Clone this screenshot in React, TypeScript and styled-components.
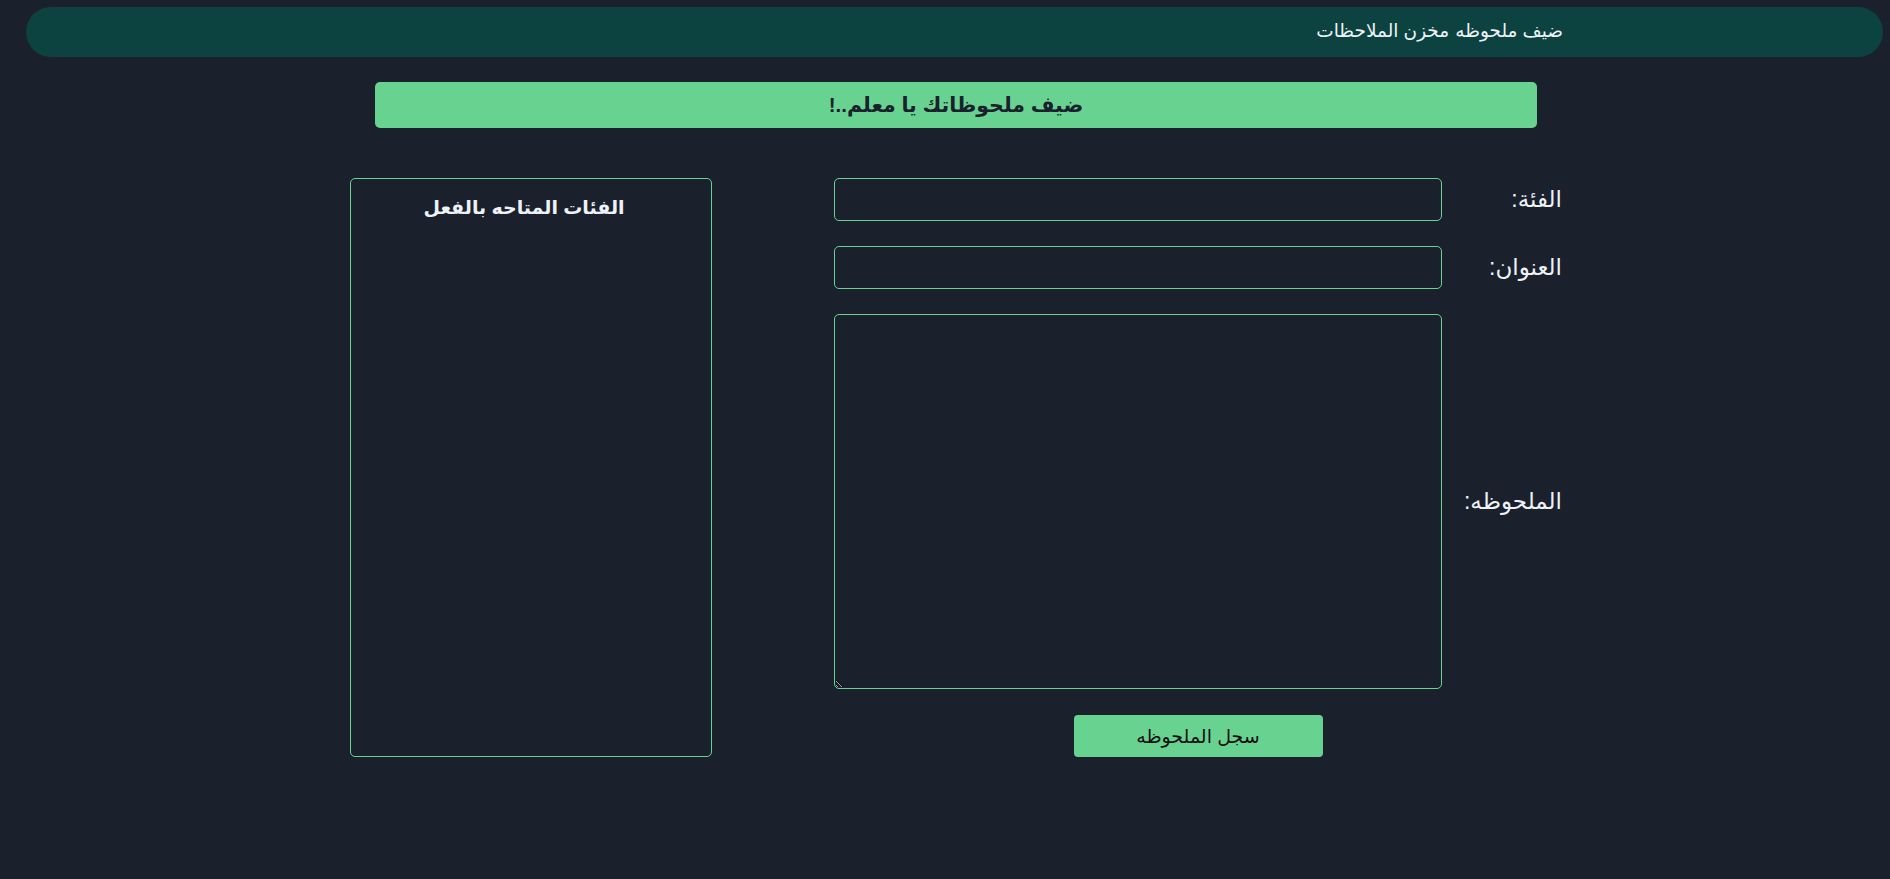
import React from "react";
import styled, { createGlobalStyle } from "styled-components";

const Global = createGlobalStyle`
  html, body {
    margin: 0;
    padding: 0;
    background: #1a202c;
    font-family: "Liberation Sans", "DejaVu Sans", sans-serif;
    color: #edf2f7;
  }
  * { box-sizing: border-box; }
`;

const Page = styled.div`
  direction: rtl;
  min-height: 879px;
  padding-top: 7px;
`;

const Nav = styled.nav`
  height: 50px;
  margin: 0 7px 0 26px;
  background: #0c4340;
  border-radius: 25px;
  display: flex;
  align-items: center;
  padding: 0 320px 3px 0;
  gap: 6px;
`;

const NavLink = styled.a`
  color: #edf2f7;
  font-size: 18.5px;
  text-decoration: none;
  cursor: pointer;
`;

const Main = styled.main`
  display: flex;
  flex-direction: column;
  align-items: center;
  padding-left: 22px;
`;

const Inner = styled.div`
  width: 1212px;
  display: flex;
  flex-direction: column;
  align-items: center;
`;

const Banner = styled.h1`
  margin: 25px 0 0;
  width: 1162px;
  height: 46px;
  background: #68d391;
  color: #1a202c;
  border-radius: 5px;
  font-size: 20.5px;
  font-weight: bold;
  display: flex;
  align-items: center;
  justify-content: center;
`;

const Row = styled.div`
  margin-top: 50px;
  width: 100%;
  display: flex;
  justify-content: space-between;
  align-items: flex-start;
`;

const Form = styled.form`
  width: 728px;
  display: grid;
  grid-template-columns: 120px 608px;
  row-gap: 25px;
  align-items: center;
`;

const Label = styled.label`
  font-size: 23px;
  color: #edf2f7;
  text-align: right;
`;

const Input = styled.input`
  height: 43px;
  width: 608px;
  background: #1a202c;
  border: 1px solid #68d391;
  border-radius: 5px;
  color: #edf2f7;
  font-size: 16px;
  outline: none;
  padding: 0 10px;
`;

const TextArea = styled.textarea`
  height: 375px;
  width: 608px;
  background: #1a202c;
  border: 1px solid #68d391;
  border-radius: 5px;
  color: #edf2f7;
  font-size: 16px;
  outline: none;
  padding: 10px;
  display: block;
`;

const ButtonCell = styled.div`
  grid-column: 1 / span 2;
  display: flex;
  justify-content: center;
  margin-top: 1px;
`;

const Submit = styled.button`
  width: 249px;
  height: 42px;
  background: #68d391;
  border: none;
  border-radius: 4px;
  color: #111;
  font-family: inherit;
  font-size: 19px;
  cursor: pointer;
`;

const Categories = styled.div`
  width: 362px;
  height: 579px;
  border: 1px solid #68d391;
  border-radius: 5px;
  padding: 17px 14px 0 0;
`;

const CatTitle = styled.h2`
  margin: 0;
  text-align: center;
  font-size: 19px;
  font-weight: bold;
  color: #edf2f7;
`;

export default function App() {
  return (
    <>
      <Global />
      <Page>
        <Nav>
          <NavLink>ضيف ملحوظه</NavLink>
          <NavLink>مخزن الملاحظات</NavLink>
        </Nav>
        <Main>
          <Inner>
            <Banner>ضيف ملحوظاتك يا معلم..!</Banner>
            <Row>
              <Form onSubmit={(e) => e.preventDefault()}>
                <Label htmlFor="cat">الفئة:</Label>
                <Input id="cat" type="text" />
                <Label htmlFor="title">العنوان:</Label>
                <Input id="title" type="text" />
                <Label htmlFor="note">الملحوظه:</Label>
                <TextArea id="note" />
                <ButtonCell>
                  <Submit type="submit">سجل الملحوظه</Submit>
                </ButtonCell>
              </Form>
              <Categories>
                <CatTitle>الفئات المتاحه بالفعل</CatTitle>
              </Categories>
            </Row>
          </Inner>
        </Main>
      </Page>
    </>
  );
}
